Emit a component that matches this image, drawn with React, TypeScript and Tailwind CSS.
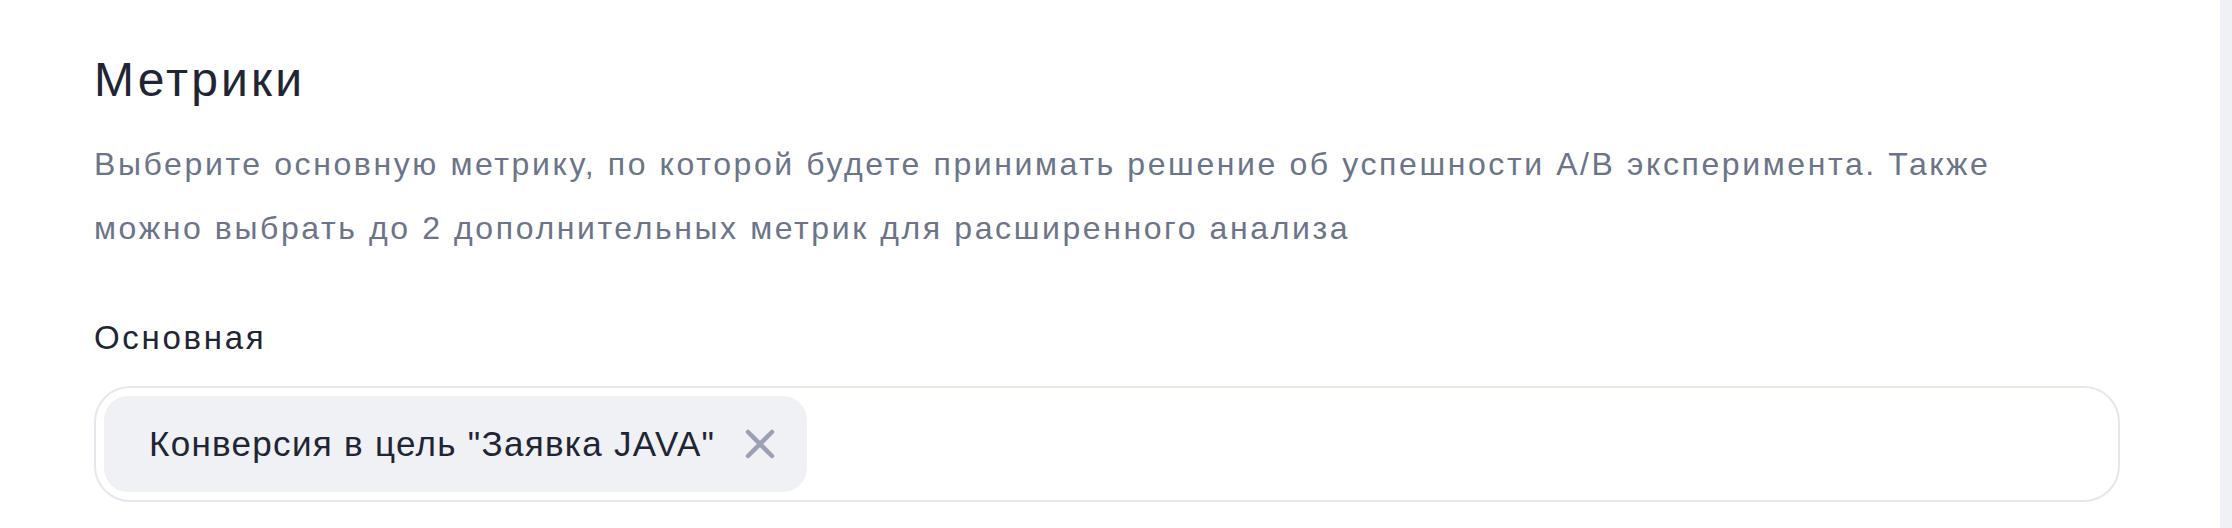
import React from "react";

export default function App() {
  return (
    <div
      className="flex h-[528px] w-full bg-white"
      style={{ fontFamily: '"Liberation Sans", Arial, sans-serif' }}
    >
      <div className="flex-1 pl-[94px] pr-[100px] pt-[52px]">
        <h1 className="text-[48px] leading-[56px] font-normal tracking-[3.2px] text-[#1f2534]">Метрики</h1>
        <p className="mt-[24px] max-w-[1960px] text-[32px] leading-[64px] tracking-[2.6px] text-[#6b7489]">
          Выберите основную метрику, по которой будете принимать решение об успешности A/B эксперимента. Также
          можно выбрать до 2 дополнительных метрик для расширенного анализа
        </p>
        <div className="mt-[54px] text-[33px] leading-[48px] tracking-[2.7px] text-[#1f2534]">Основная</div>
        <div className="mt-[24px] flex h-[116px] items-center rounded-[36px] border-2 border-[#e6e7ee] bg-white px-[8px]">
          <div className="flex h-[96px] items-center gap-[30px] rounded-[24px] bg-[#eff1f4] pl-[45px] pr-[32px]">
            <span className="text-[35px] tracking-[1.3px] text-[#1f2534]">Конверсия в цель "Заявка JAVA"</span>
            <svg width="30" height="30" viewBox="0 0 30 30" fill="none">
              <path d="M3 3 L27 27 M27 3 L3 27" stroke="#9ca0b4" strokeWidth="4.5" strokeLinecap="round" />
            </svg>
          </div>
        </div>
      </div>
      <div className="w-[12px] bg-[#eff1f4]" />
    </div>
  );
}
